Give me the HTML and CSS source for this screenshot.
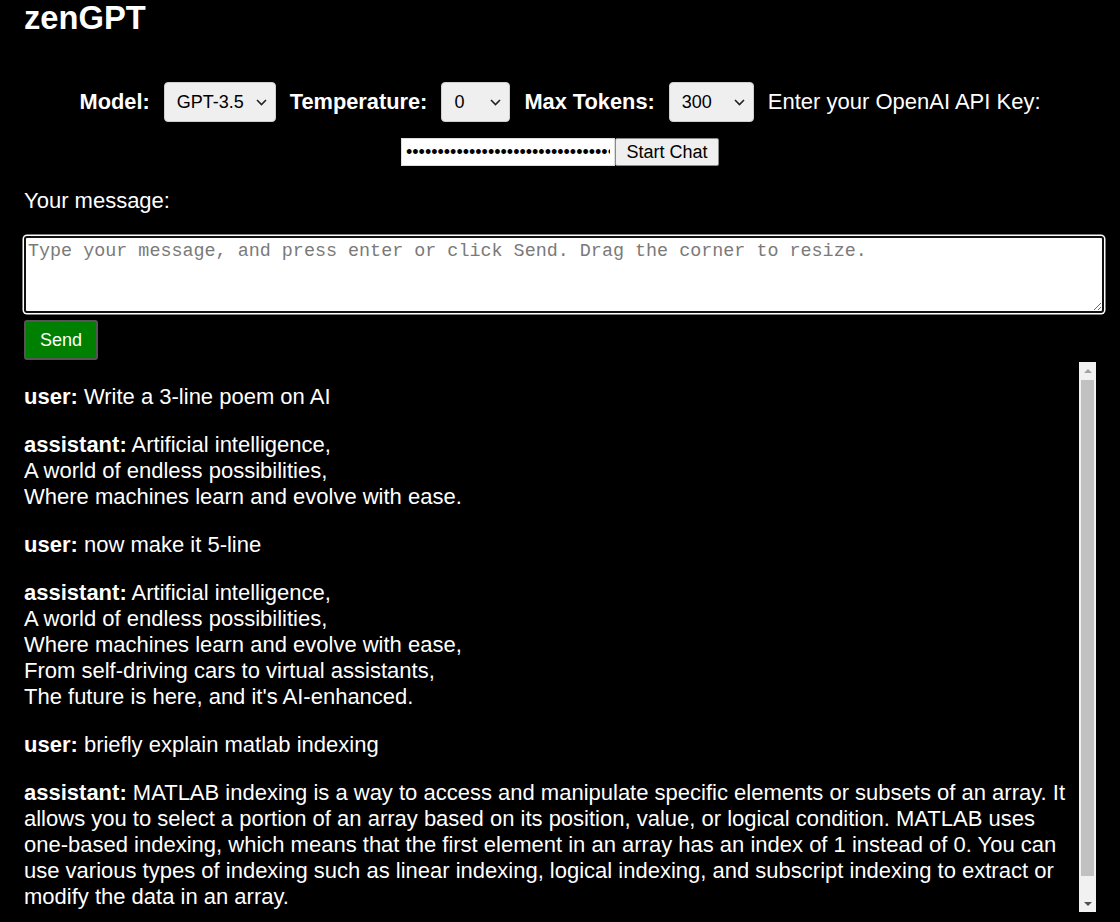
FILE: index.html
```html
<!DOCTYPE html>
<html lang="en">
<head>
<meta charset="utf-8">
<title>zenGPT</title>
<link rel="stylesheet" href="styles.css">
</head>
<body>
<h1 class="title">zenGPT</h1>
<div class="controls">
  <label class="ctl-label" for="model">Model:</label>
  <select id="model" class="sel sel-model"><option>GPT-3.5</option><option>GPT-4</option></select>
  <label class="ctl-label" for="temp">Temperature:</label>
  <select id="temp" class="sel sel-temp"><option>0</option><option>0.5</option><option>1</option></select>
  <label class="ctl-label" for="tokens">Max Tokens:</label>
  <select id="tokens" class="sel sel-tokens"><option>300</option><option>1000</option></select>
  <span class="key-label">Enter your OpenAI API Key:</span>
</div>
<div class="keyrow">
  <input class="key-input" type="password" value="sk-abcdefghijklmnopqrstuvwxyz0123456789ABCDEFGHIJKLMNOP">
  <button class="start-btn" type="button">Start Chat</button>
</div>
<div class="msg-label">Your message:</div>
<textarea class="msg-input" placeholder="Type your message, and press enter or click Send. Drag the corner to resize."></textarea>
<button class="send-btn" type="button">Send</button>
<div class="chat">
  <div class="chat-body">
    <p class="msg"><b>user:</b> Write a 3-line poem on AI</p>
    <p class="msg"><b>assistant:</b> Artificial intelligence,<br>A world of endless possibilities,<br>Where machines learn and evolve with ease.</p>
    <p class="msg"><b>user:</b> now make it 5-line</p>
    <p class="msg"><b>assistant:</b> Artificial intelligence,<br>A world of endless possibilities,<br>Where machines learn and evolve with ease,<br>From self-driving cars to virtual assistants,<br>The future is here, and it's AI-enhanced.</p>
    <p class="msg"><b>user:</b> briefly explain matlab indexing</p>
    <p class="msg"><b>assistant:</b> MATLAB indexing is a way to access and manipulate specific elements or subsets of an array. It allows you to select a portion of an array based on its position, value, or logical condition. MATLAB uses one-based indexing, which means that the first element in an array has an index of 1 instead of 0. You can use various types of indexing such as linear indexing, logical indexing, and subscript indexing to extract or modify the data in an array.</p>
  </div>
  <div class="scrollbar" aria-hidden="true">
    <div class="sb-btn"><span class="tri-up"></span></div>
    <div class="sb-track"><div class="sb-thumb"></div></div>
    <div class="sb-btn"><span class="tri-down"></span></div>
  </div>
</div>
</body>
</html>
```

FILE: styles.css
```css
html, body {
  margin: 0;
  background: #000;
}
body {
  padding: 0 24px;
  color: #fff;
  font-family: "Liberation Sans", Arial, sans-serif;
  font-size: 22px;
  line-height: 26px;
  overflow: hidden;
}
.title {
  margin: 0;
  font-size: 32.7px;
  line-height: 36px;
  font-weight: bold;
}
.controls {
  margin-top: 46px;
  display: flex;
  justify-content: center;
  align-items: center;
  gap: 14px;
}
.ctl-label {
  font-weight: bold;
  font-size: 21.8px;
}
.sel {
  -webkit-appearance: none;
  appearance: none;
  box-sizing: border-box;
  height: 40px;
  padding: 0 0 0 12px;
  border: 1px solid #cfcfcf;
  border-radius: 4px;
  background-color: #efefef;
  background-image: url("data:image/svg+xml,%3Csvg xmlns='http://www.w3.org/2000/svg' width='11' height='7' viewBox='0 0 11 7'%3E%3Cpolyline points='1,1 5.5,5.5 10,1' fill='none' stroke='%23222' stroke-width='1.6'/%3E%3C/svg%3E");
  background-repeat: no-repeat;
  background-position: right 8px center;
  color: #000;
  font-family: "Liberation Sans", Arial, sans-serif;
  font-size: 18px;
}
.sel-model { width: 112px; }
.sel-temp { width: 69px; }
.sel-tokens { width: 85px; }
.key-label {
  font-size: 22px;
}
.keyrow {
  margin-top: 16px;
  display: flex;
  justify-content: center;
}
.key-input {
  box-sizing: border-box;
  width: 214px;
  height: 28px;
  padding: 1px 4px;
  border: 1px solid #dcdcdc;
  border-radius: 0;
  background: #fff;
  color: #000;
  font-family: "Liberation Sans", Arial, sans-serif;
  font-size: 18px;
  outline: none;
}
.start-btn {
  box-sizing: border-box;
  width: 104px;
  height: 28px;
  padding: 0;
  border: 1px solid #8a8a8a;
  border-radius: 2px;
  background: #efefef;
  color: #000;
  font-family: "Liberation Sans", Arial, sans-serif;
  font-size: 18px;
}
.msg-label {
  margin: 22px 0;
  line-height: 26px;
}
.msg-input {
  display: block;
  box-sizing: border-box;
  width: 1080px;
  height: 77px;
  margin: 0;
  padding: 3px 2px 2px;
  border: 2px solid #101010;
  border-radius: 3px;
  box-shadow: 0 0 0 1.5px #fff;
  outline: none;
  background: #fff;
  color: #000;
  font-family: "Liberation Mono", "DejaVu Sans Mono", monospace;
  font-size: 18.4px;
  line-height: 22px;
  resize: vertical;
}
.msg-input::placeholder {
  color: #7a7a7a;
}
.send-btn {
  display: block;
  box-sizing: border-box;
  margin-top: 7px;
  width: 74px;
  height: 40px;
  padding: 0;
  border: 2px solid #555;
  border-radius: 3px;
  background: #008000;
  color: #fff;
  font-family: "Liberation Sans", Arial, sans-serif;
  font-size: 18px;
}
.chat {
  margin-top: 2px;
  height: 550px;
  display: flex;
}
.chat-body {
  flex: 1;
  min-width: 0;
  overflow: hidden;
}
.msg {
  margin: 22px 0;
}
.msg b {
  font-weight: bold;
}
.scrollbar {
  width: 17px;
  flex: none;
  display: flex;
  flex-direction: column;
  background: #f1f1f1;
}
.sb-btn {
  height: 17px;
  flex: none;
  display: flex;
  align-items: center;
  justify-content: center;
}
.tri-up {
  width: 0;
  height: 0;
  border-left: 4px solid transparent;
  border-right: 4px solid transparent;
  border-bottom: 4px solid #a3a3a3;
}
.tri-down {
  width: 0;
  height: 0;
  border-left: 4px solid transparent;
  border-right: 4px solid transparent;
  border-top: 4px solid #505050;
}
.sb-track {
  flex: 1;
  padding: 1px 2px 0;
}
.sb-thumb {
  height: 496px;
  background: #c1c1c1;
}
```
